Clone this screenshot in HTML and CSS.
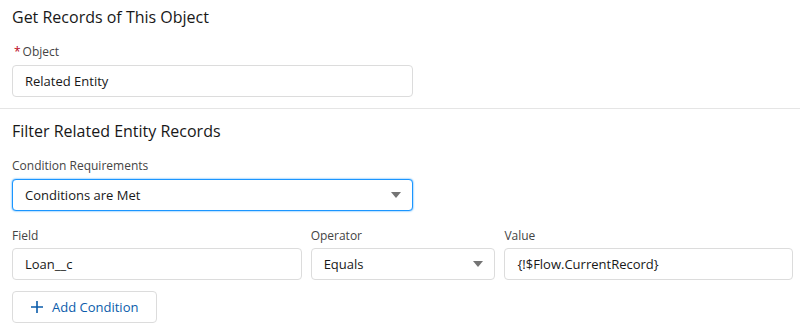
FILE: index.html
```html
<!DOCTYPE html>
<html lang="en">

<head>
    <meta charset="UTF-8">
    <meta name="viewport" content="width=device-width, initial-scale=1.0">
    <title>Get Records</title>
    <link rel="stylesheet" href="styles.css">
</head>

<body>
    <div class="section section-top">
        <h2 class="section-title">Get Records of This Object</h2>
        <div class="form-element">
            <label class="form-label"><abbr class="required">*</abbr>Object</label>
            <div class="input wide">Related Entity</div>
        </div>
    </div>

    <div class="section">
        <h2 class="section-title">Filter Related Entity Records</h2>
        <div class="form-element">
            <label class="form-label">Condition Requirements</label>
            <div class="input select wide focused">
                <span>Conditions are Met</span>
                <span class="caret"></span>
            </div>
        </div>

        <div class="condition-row">
            <div class="form-element col-field">
                <label class="form-label">Field</label>
                <div class="input">Loan__c</div>
            </div>
            <div class="form-element col-operator">
                <label class="form-label">Operator</label>
                <div class="input select">
                    <span>Equals</span>
                    <span class="caret"></span>
                </div>
            </div>
            <div class="form-element col-value">
                <label class="form-label">Value</label>
                <div class="input">{!$Flow.CurrentRecord}</div>
            </div>
        </div>

        <button class="add-btn">
            <svg class="add-icon" width="14" height="14" viewBox="0 0 14 14">
                <path d="M7 1v12M1 7h12" stroke="currentColor" stroke-width="1.6" fill="none" />
            </svg>
            Add Condition
        </button>
    </div>
</body>

</html>
```

FILE: styles.css
```css
body {
    font-family: "Open Sans", Arial, sans-serif;
    margin: 0;
    background-color: white;
    color: #181818;
}
.section {
    padding: 10px 7px 0 12px;
}
.section-top {
    padding-top: 5px;
    padding-bottom: 11px;
    border-bottom: 1px solid #e5e5e5;
}
.section-title {
    font-size: 16px;
    font-weight: normal;
    line-height: 24px;
    margin: 0 0 14px 0;
}
.form-element {
    display: flex;
    flex-direction: column;
}
.form-label {
    font-size: 12px;
    line-height: 18px;
    color: #444444;
    margin-bottom: 4px;
}
.required {
    color: #ba0517;
    text-decoration: none;
    margin: 0 2px;
}
.input {
    box-sizing: border-box;
    height: 32px;
    border: 1px solid #dcdcdc;
    border-radius: 4px;
    padding: 0 12px;
    font-size: 13px;
    line-height: 30px;
    color: #181818;
    background-color: white;
}
.wide {
    width: 401px;
}
.select {
    display: flex;
    justify-content: space-between;
    align-items: center;
}
.focused {
    border-color: #1b96ff;
    box-shadow: 0 0 2px #1b96ff;
}
.caret {
    width: 0;
    height: 0;
    border-left: 5px solid transparent;
    border-right: 5px solid transparent;
    border-top: 6px solid #747474;
    margin-right: -1px;
}
.condition-row {
    display: flex;
    gap: 9px;
    margin-top: 16px;
}
.condition-row .form-label {
    margin-bottom: 3px;
}
.col-field {
    width: 290px;
}
.col-operator {
    width: 185px;
}
.col-value {
    width: 289px;
}
.add-btn {
    display: flex;
    align-items: center;
    gap: 8px;
    margin-top: 11px;
    height: 32px;
    padding: 0 18px 0 17px;
    border: 1px solid #dcdcdc;
    border-radius: 4px;
    background-color: white;
    color: #0b5cab;
    font-family: inherit;
    font-size: 13px;
    cursor: pointer;
}
```
